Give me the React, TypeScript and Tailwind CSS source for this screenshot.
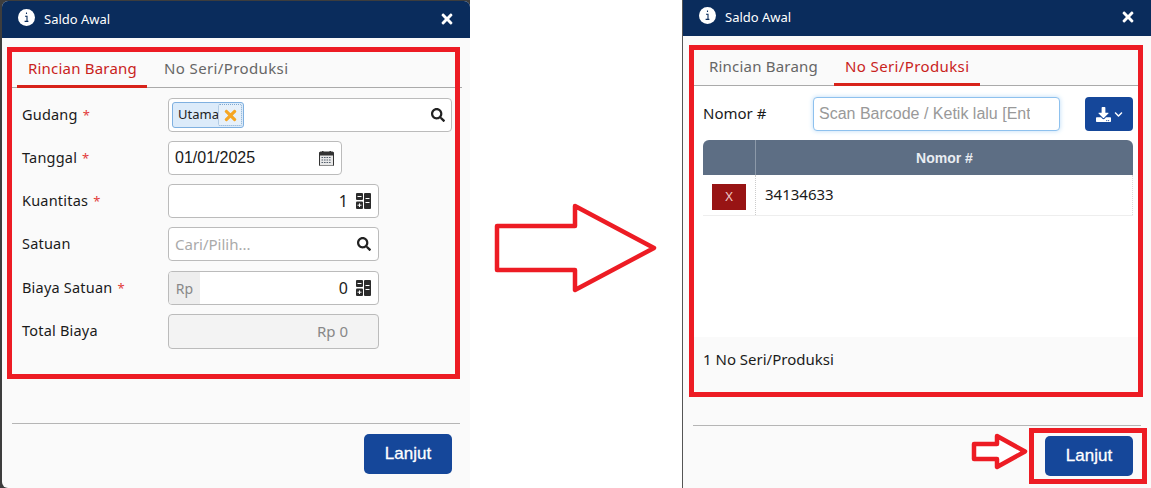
import React from "react";
import { FaSearch, FaTimes, FaDownload, FaChevronDown } from "react-icons/fa";

const sans = "font-['Noto_Sans','Open_Sans',sans-serif]";
const arial = "font-['Liberation_Sans',Arial,sans-serif]";

function Calc() {
  return (
    <svg width="15" height="16" viewBox="0 0 15 16" className="shrink-0">
      <rect x="0" y="0" width="7" height="7" rx="1" fill="#2b2b2b" />
      <rect x="0" y="8.5" width="7" height="7.5" rx="1" fill="#2b2b2b" />
      <rect x="8" y="0" width="7" height="16" rx="1" fill="#2b2b2b" />
      <path d="M1.5 3.5H5.5M1.5 12.2H5.5M3.5 10.4V14M9.5 5.5H13.5M9.5 9.5H13.5" stroke="#fff" strokeWidth="1" />
    </svg>
  );
}

function Cal() {
  return (
    <svg width="15" height="15" viewBox="0 0 15 15" className="shrink-0">
      <rect x="0.5" y="1" width="14" height="14" rx="1" fill="#e8e8e8" stroke="#333" />
      <rect x="0.5" y="1" width="14" height="3.5" fill="#333" />
      <rect x="3" y="0" width="1.5" height="2.5" fill="#333" />
      <rect x="10.5" y="0" width="1.5" height="2.5" fill="#333" />
      <path d="M2.5 6.5H12.5M2.5 9H12.5M2.5 11.5H12.5" stroke="#55606e" strokeWidth="1.2" strokeDasharray="1.6 0.9" />
    </svg>
  );
}

function Info() {
  return (
    <svg width="17" height="17" viewBox="0 0 17 17" className="shrink-0">
      <circle cx="8.5" cy="8.5" r="8.5" fill="#fff" />
      <path d="M8.5 3.4v1.5M7 7.2h2v5M6.6 12.4h3.8" stroke="#0a2c5c" strokeWidth="1.1" fill="none" />
    </svg>
  );
}

function Header({ h, iconTop }: { h: string; iconTop: string }) {
  return (
    <div className={`${h} ${iconTop} shrink-0 bg-[#0a2c5c] flex items-start pl-[16px] pr-[15px] text-white`}>
      <Info />
      <span className={`${sans} ml-[9px] mt-[1px] text-[13px] leading-[18px]`}>Saldo Awal</span>
      <FaTimes className="ml-auto mt-[2px] text-[16px]" />
    </div>
  );
}

function Tabs({ active, h }: { active: 0 | 1; h: string }) {
  const on = "text-[#c9231c] border-[#d8231a]";
  const off = "text-[#666] border-transparent";
  return (
    <div className={`${h} ${sans} shrink-0 ml-[10px] w-[450px] flex border-b border-[#aaa] text-[15px]`}>
      <div className={`w-[130px] ml-[5px] -mb-px h-[calc(100%+1px)] border-b-[3px] flex items-start pt-[20px] pl-[11px] leading-[20px] tracking-[0.2px] ${active === 0 ? on : off}`}>
        Rincian Barang
      </div>
      <div className={`w-[146px] ml-[6px] -mb-px h-[calc(100%+1px)] border-b-[3px] flex items-start pt-[20px] pl-[11px] leading-[20px] tracking-[0.38px] ${active === 1 ? on : off}`}>
        No Seri/Produksi
      </div>
    </div>
  );
}

function Row({ label, req, children }: { label: string; req?: boolean; children: React.ReactNode }) {
  return (
    <div className="flex items-start h-[34px] mb-[9px]">
      <div className={`${sans} w-[146px] text-[14.5px] leading-[32px] text-[#1a1a1a] tracking-[0.2px]`}>
        {label}
        <span className={req ? "text-[#e23b3b] ml-[5px] text-[13px]" : "hidden"}>*</span>
      </div>
      {children}
    </div>
  );
}

const field = "h-[34px] rounded-[4px] border border-[#bbb] bg-white flex items-center";

function LeftDialog() {
  return (
    <div className="relative w-[468px] h-[487px] mt-[1px] ml-[2px] rounded-t-[6px] rounded-bl-[6px] overflow-hidden bg-[#fafafa] flex flex-col">
      <Header h="h-[37px]" iconTop="pt-[8px]" />
      <Tabs active={0} h="h-[50px]" />
      <div className="mt-[10px] pl-[20px] pr-[18px]">
        <Row label="Gudang" req>
          <div className={`${field} w-[284px] px-[3px]`}>
            <div className="relative h-[26px] w-[72px] rounded-[3px] border border-[#7fb0e0] bg-[#dcebfa] flex items-center pl-[5px]">
              <span className={`${sans} text-[13px] text-[#222]`}>Utama</span>
              <div className="absolute right-[1px] top-[1px] h-[22px] w-[24px] rounded-[2px] border border-dotted border-[#7fa8d0] bg-[#e6f0fa] flex items-center justify-center">
                <FaTimes className="text-[17px] text-[#f5a623]" />
              </div>
            </div>
            <FaSearch className="ml-auto mr-[3px] text-[14px] text-[#222]" />
          </div>
        </Row>
        <Row label="Tanggal" req>
          <div className={`${field} w-[174px] pl-[6px] pr-[7px] justify-between`}>
            <span className={`${arial} text-[16px] text-[#1a1a1a]`}>01/01/2025</span>
            <Cal />
          </div>
        </Row>
        <Row label="Kuantitas" req>
          <div className={`${field} w-[211px] justify-end pr-[7px]`}>
            <span className={`${sans} text-[16px] text-[#222] mr-[8px]`}>1</span>
            <Calc />
          </div>
        </Row>
        <Row label="Satuan">
          <div className={`${field} w-[211px] pl-[6px] pr-[7px] justify-between`}>
            <span className={`${sans} text-[15px] text-[#aaa]`}>Cari/Pilih...</span>
            <FaSearch className="text-[14px] text-[#222]" />
          </div>
        </Row>
        <div className="h-px" />
        <Row label="Biaya Satuan" req>
          <div className={`${field} w-[211px] overflow-hidden pr-[7px]`}>
            <span className={`${sans} h-full w-[31px] bg-[#eeeeee] text-[#888] text-[14px] flex items-center justify-center`}>Rp</span>
            <span className={`${sans} ml-auto text-[16px] text-[#222] mr-[8px]`}>0</span>
            <Calc />
          </div>
        </Row>
        <Row label="Total Biaya">
          <div className={`${field} !h-[35px] !bg-[#f3f3f3] w-[211px] justify-end pr-[30px]`}>
            <span className={`${sans} text-[15px] text-[#888]`}>Rp 0</span>
          </div>
        </Row>
      </div>
      <div className="mt-[66px] mx-[10px] border-t border-[#b5b5b5]" />
      <div className="flex justify-end pr-[18px] pt-[10px]">
        <button className={`${arial} w-[88px] h-[40px] rounded-[5px] bg-[#15479a] text-white text-[17px] [-webkit-text-stroke:0.3px_#fff]`}>Lanjut</button>
      </div>
      <div className="absolute pointer-events-none left-[5px] top-[46px] w-[453px] h-[332px] border-[5px] border-[#ed1c24]" />
    </div>
  );
}

function RightDialog() {
  return (
    <div className="relative w-[469px] h-[488px] shrink-0 border-l border-[#555] bg-[#fafafa] flex flex-col">
      <Header h="h-[36px]" iconTop="pt-[7px]" />
      <Tabs active={1} h="h-[50px]" />
      <div className="h-[251px] shrink-0 mx-[10px] bg-white pl-[10px] pr-[8px]">
        <div className="flex items-start pt-[11px] h-[54px]">
          <span className={`${sans} w-[110px] text-[15px] leading-[32px] text-[#1a1a1a]`}>Nomor #</span>
          <input
            readOnly
            placeholder="Scan Barcode / Ketik lalu [Enter]"
            className={`${arial} w-[247px] h-[34px] rounded-[4px] border border-[#8ec1ee] bg-white pl-[5px] pr-[29px] text-[16px] outline-none shadow-[0_0_5px_#bcdcf7] placeholder:text-[#999]`}
          />
          <button className="ml-auto w-[48px] h-[34px] rounded-[4px] bg-[#15479a] text-white flex items-center justify-center gap-[3px]">
            <FaDownload className="text-[15px]" />
            <FaChevronDown className="text-[9px]" />
          </button>
        </div>
        <div className="h-[35px] rounded-t-[6px] bg-[#5d6e84] flex text-white">
          <div className="w-[53px] border-r border-[#8c99a9]" />
          <div className={`${arial} flex-1 flex items-center justify-center pt-[2px] text-[14px] font-bold text-[#e9edf2]`}>Nomor #</div>
        </div>
        <div className="h-[41px] border-b border-[#eee] flex">
          <div className="w-[53px] border-r border-dotted border-[#ccc] pl-[9px] pt-[9px]">
            <div className={`${sans} w-[34px] h-[26px] bg-[#981414] text-[#f0c8c8] text-[13px] flex items-center justify-center`}>X</div>
          </div>
          <div className={`${sans} pl-[9px] pt-[9px] text-[15px] leading-[20px] text-[#1a1a1a]`}>34134633</div>
          <div className="ml-auto border-r border-dotted border-[#ddd]" />
        </div>
      </div>
      <div className={`${sans} ml-[20px] mt-[12px] text-[15px] leading-[20px] text-[#1a1a1a]`}>1 No Seri/Produksi</div>
      <div className="mt-[56px] mx-[10px] border-t border-[#b5b5b5]" />
      <div className="flex justify-end pr-[18px] pt-[10px]">
        <button className={`${arial} w-[88px] h-[40px] rounded-[5px] bg-[#15479a] text-white text-[17px] [-webkit-text-stroke:0.3px_#fff]`}>Lanjut</button>
      </div>
      <div className="absolute pointer-events-none left-[6px] top-[45px] w-[454px] h-[352px] border-[5px] border-[#ed1c24]" />
      <div className="absolute pointer-events-none left-[346px] top-[428px] w-[118px] h-[56px] border-[5px] border-[#ed1c24]" />
      <svg className="absolute pointer-events-none left-[288px] top-[433px]" width="58" height="38" viewBox="0 0 58 38">
        <path d="M3 11H26V3L54 18.5L26 34V26H3Z" fill="#fff" stroke="#ed1c24" strokeWidth="4.5" strokeLinejoin="round" />
      </svg>
    </div>
  );
}

export default function App() {
  return (
    <div className="w-[1151px] h-[488px] overflow-hidden bg-white flex">
      <div className="w-[470px] h-[488px] shrink-0 bg-[#3d3d3d]">
        <LeftDialog />
      </div>
      <div className="flex-1 flex items-center justify-center pt-[10px]">
        <svg width="164" height="92" viewBox="0 0 164 92">
          <path d="M3 23H81V3L160 45L81 87V67H3Z" fill="#fff" stroke="#ed1c24" strokeWidth="4.5" strokeLinejoin="round" />
        </svg>
      </div>
      <RightDialog />
    </div>
  );
}
